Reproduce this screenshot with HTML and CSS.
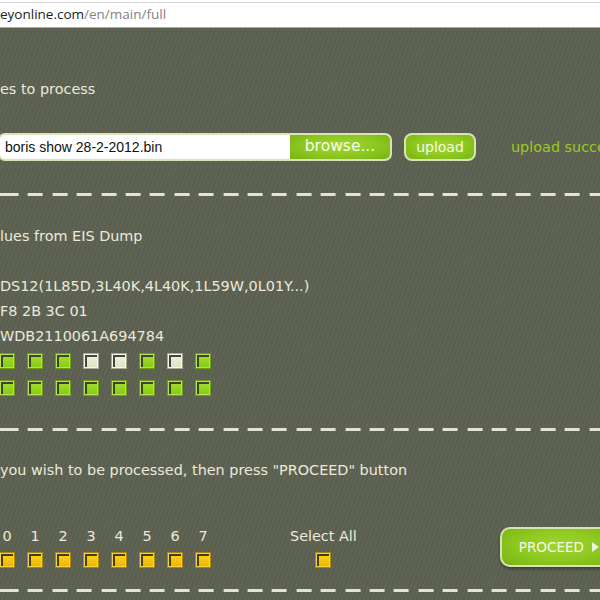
FILE: index.html
```html
<!DOCTYPE html>
<html>
<head>
<meta charset="utf-8">
<title>EIS</title>
<link rel="stylesheet" href="styles.css">
</head>
<body>
<div class="urlbar">
  <div class="urlbox"><span class="host">eyonline.com</span><span class="path">/en/main/full</span></div>
</div>
<div class="page">
  <section class="sec sec-upload">
    <p class="title">es to process</p>
    <div class="upload-row">
      <div class="file">
        <span class="fname">boris show 28-2-2012.bin</span>
        <span class="browse">browse...</span>
      </div>
      <button class="btn btn-upload">upload</button>
      <span class="status">upload success</span>
    </div>
  </section>
  <div class="dash"></div>
  <section class="sec sec-eis">
    <p class="title">lues from EIS Dump</p>
    <div class="vals">
      <div class="val">DS12(1L85D,3L40K,4L40K,1L59W,0L01Y...)</div>
      <div class="val">F8 2B 3C 01</div>
      <div class="val">WDB2110061A694784</div>
    </div>
    <div class="bits">
      <span class="cb g"></span><span class="cb g"></span><span class="cb g"></span><span class="cb c"></span>
      <span class="cb c"></span><span class="cb g"></span><span class="cb c"></span><span class="cb g"></span>
    </div>
    <div class="bits bits2">
      <span class="cb g"></span><span class="cb g"></span><span class="cb g"></span><span class="cb g"></span>
      <span class="cb g"></span><span class="cb g"></span><span class="cb g"></span><span class="cb g"></span>
    </div>
  </section>
  <div class="dash dash2"></div>
  <section class="sec sec-proc">
    <p class="lead">you wish to be processed, then press "PROCEED" button</p>
    <div class="select-row">
      <div class="cols">
        <div class="col"><span>0</span><span class="cb y"></span></div>
        <div class="col"><span>1</span><span class="cb y"></span></div>
        <div class="col"><span>2</span><span class="cb y"></span></div>
        <div class="col"><span>3</span><span class="cb y"></span></div>
        <div class="col"><span>4</span><span class="cb y"></span></div>
        <div class="col"><span>5</span><span class="cb y"></span></div>
        <div class="col"><span>6</span><span class="cb y"></span></div>
        <div class="col"><span>7</span><span class="cb y"></span></div>
      </div>
      <div class="col selall"><span>Select All</span><span class="cb y"></span></div>
      <button class="btn proceed">PROCEED<span class="arrow"></span></button>
    </div>
  </section>
  <div class="dash dash3"></div>
</div>
</body>
</html>
```

FILE: styles.css
```css
* { box-sizing: border-box; }
html, body { margin: 0; padding: 0; }
body {
  width: 600px;
  height: 600px;
  overflow: hidden;
  font-family: "DejaVu Sans", Verdana, sans-serif;
  font-size: 14.4px;
  color: #ebeadb;
  background: #5e6252;
}
.urlbar {
  height: 28px;
  background: #ffffff;
  border-bottom: 1px solid #a9a9a9;
  padding-top: 2px;
}
.urlbox {
  height: 25px;
  border-top: 1px solid #d6d6d6;
  font-family: "Open Sans", sans-serif;
  font-size: 13.5px;
  line-height: 22px;
  white-space: nowrap;
}
.host { color: #202020; }
.path { color: #838383; }

.page {
  height: 572px;
  overflow: hidden;
  background: repeating-linear-gradient(110deg, #606455 0 2px, #5b5f50 2px 4px);
}
.sec p { margin: 0; line-height: 18px; white-space: nowrap; }
.sec-upload { padding-top: 52px; }

.upload-row {
  display: flex;
  align-items: center;
  margin-top: 35px;
  height: 28px;
  white-space: nowrap;
}
.upload-row > * { flex: none; }
.file {
  display: flex;
  width: 394px;
  height: 28px;
  margin-left: -2px;
  border: 2px solid #d9e3b3;
  border-radius: 7px;
  overflow: hidden;
  background: #ffffff;
}
.fname {
  flex: 1;
  font-family: "Liberation Sans", Arial, sans-serif;
  font-size: 14px;
  color: #111111;
  line-height: 24px;
  padding-left: 5px;
}
.browse {
  width: 100px;
  flex: none;
  background: radial-gradient(ellipse at 50% 45%, #a2d52f 0%, #8cc71f 55%, #79b212 100%);
  color: #f7faec;
  font-size: 15.5px;
  line-height: 23px;
  text-align: center;
}
.btn {
  font-family: "DejaVu Sans", Verdana, sans-serif;
  border: 2px solid #d9e3b3;
  background: radial-gradient(ellipse at 50% 45%, #a2d52f 0%, #8cc71f 55%, #79b212 100%);
  color: #f4f8e6;
  padding: 0;
  cursor: pointer;
}
.btn-upload {
  margin-left: 12px;
  width: 72px;
  height: 28px;
  border-radius: 8px;
  font-size: 14px;
  line-height: 22px;
}
.status {
  margin-left: 35px;
  color: #9ccb20;
  font-size: 14.4px;
}

.dash {
  height: 3px;
  margin-top: 32px;
  background: repeating-linear-gradient(90deg, #e3e3d3 0 15px, transparent 15px 24.4px);
  background-position: 3.6px 0;
}

.sec-eis .title { margin-top: 31px; }
.vals { margin-top: 29px; }
.val { line-height: 25px; white-space: nowrap; }
.bits {
  display: flex;
  gap: 12px;
  margin-left: -1px;
  margin-top: 4px;
}
.bits2 { margin-top: 11px; }

.cb {
  display: block;
  width: 16px;
  height: 16px;
  flex: none;
  border: 1px solid #6f9e12;
  background: linear-gradient(#a8e32e, #84c816);
  box-shadow: inset 0 0 0 1px #b4e64a, inset 3px 3px 0 #3d4035;
}
.cb.c {
  border-color: #a9aa96;
  background: linear-gradient(#f1f2de, #dfe1c6);
  box-shadow: inset 0 0 0 1px #f6f6ea, inset 3px 3px 0 #45463c;
}
.cb.y {
  border-color: #b08700;
  background: linear-gradient(#ffd61e, #eab600);
  box-shadow: inset 0 0 0 1px #f7d43c, inset 3px 3px 0 #3f3d30;
}

.dash2 { margin-top: 32px; }
.sec .lead { margin-top: 30px; }
.select-row {
  display: flex;
  align-items: flex-start;
  margin-top: 48px;
  height: 41px;
}
.select-row > * { flex: none; }
.cols {
  display: flex;
  gap: 12px;
  margin-left: -1px;
}
.col {
  width: 16px;
  display: flex;
  flex-direction: column;
  align-items: center;
  gap: 7px;
}
.col span:first-child { line-height: 18px; white-space: nowrap; }
.selall { width: auto; margin-left: 79px; }
.proceed {
  margin-left: 143px;
  width: 118px;
  height: 40px;
  border-radius: 10px;
  font-size: 13.5px;
  text-align: left;
  padding-left: 17px;
  display: flex;
  align-items: center;
  white-space: nowrap;
  box-shadow: 0 2px 3px rgba(0, 0, 0, 0.35);
}
.arrow {
  display: inline-block;
  margin-left: 8px;
  width: 0;
  height: 0;
  border-top: 5px solid transparent;
  border-bottom: 5px solid transparent;
  border-left: 7px solid #eef4dc;
}
.dash3 { margin-top: 21px; }
```
